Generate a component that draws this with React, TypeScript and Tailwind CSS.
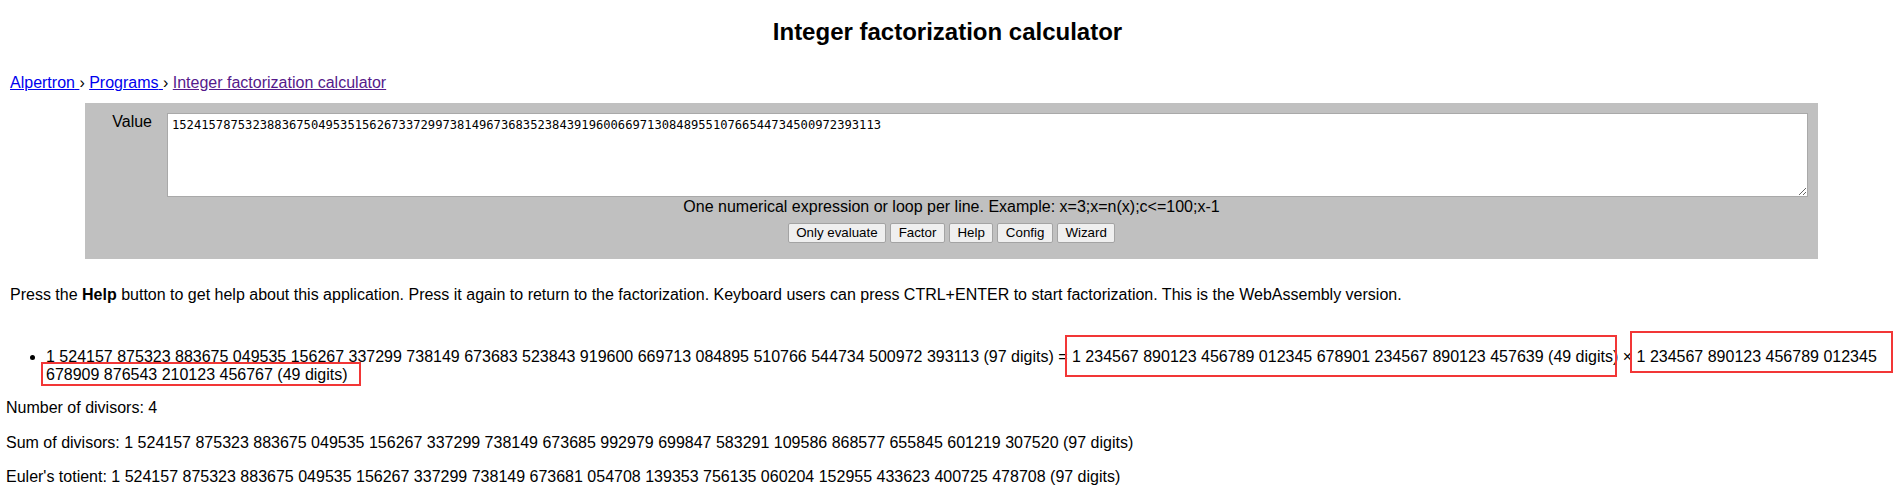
import React from "react";

const NUMBER =
  "1524157875323883675049535156267337299738149673683523843919600669713084895510766544734500972393113";

const buttons = ["Only evaluate", "Factor", "Help", "Config", "Wizard"];

// red annotation rectangles drawn over the result line
const marks = [
  "left-[1065px] top-[335px] w-[552px] h-[42px]",
  "left-[1630px] top-[331px] w-[263px] h-[42px]",
  "left-[41px] top-[362px] w-[320px] h-[24px]",
];

export default function App() {
  return (
    <div className="relative min-h-[504px] bg-white font-['Liberation_Sans',Arial,sans-serif] text-[16px] text-black">
      <h1 className="pt-[18px] text-center text-[24px] font-bold leading-[28px]">
        Integer factorization calculator
      </h1>

      <div className="mt-[28px] pl-[10px] leading-[18px]">
        <a href="#" className="text-[#0000ee] underline">
          Alpertron{" "}
        </a>
        ›{" "}
        <a href="#" className="text-[#0000ee] underline">
          Programs{" "}
        </a>
        ›{" "}
        <a href="#" className="text-[#551a8b] underline">
          Integer factorization calculator
        </a>
      </div>

      <div className="ml-[85px] mt-[11px] h-[156px] w-[1733px] bg-[#c0c0c0] pt-[10px]">
        <div className="flex pr-[10px]">
          <label className="w-[82px] shrink-0 pr-[15px] text-right leading-[18px]">Value</label>
          <textarea
            defaultValue={NUMBER}
            spellCheck={false}
            className="h-[84px] flex-1 border border-[#a9a9a9] bg-white px-[4px] pt-[4px] font-['DejaVu_Sans_Mono',monospace] text-[12.15px] leading-[15px] text-black outline-none"
          />
        </div>
        <p className="mt-[1px] text-center leading-[18px]">
          One numerical expression or loop per line. Example: x=3;x=n(x);c&lt;=100;x-1
        </p>
        <div className="mt-[7px] flex justify-center gap-[4px]">
          {buttons.map((b) => (
            <button
              key={b}
              className="h-[20px] rounded-[2px] border border-[#a3a3a3] bg-[#efefef] px-[7.5px] text-[13.33px] leading-[18px] text-black"
            >
              {b}
            </button>
          ))}
        </div>
      </div>

      <p className="mt-[27px] pl-[10px] leading-[18px]">
        Press the <b>Help</b> button to get help about this application. Press it again to return to the
        factorization. Keyboard users can press CTRL+ENTER to start factorization. This is the WebAssembly
        version.
      </p>

      <ul className="mt-[43.5px] list-disc pl-[46px] pr-[8px] leading-[18.4px]">
        <li>
          1 524157 875323 883675 049535 156267 337299 738149 673683 523843 919600 669713 084895 510766 544734
          500972 393113 (97 digits) = 1 234567 890123 456789 012345 678901 234567 890123 457639 (49 digits) ×
          1 234567 890123 456789 012345 678909 876543 210123 456767 (49 digits)
        </li>
      </ul>

      <p className="mt-[15px] pl-[6px] leading-[18.4px]">Number of divisors: 4</p>
      <p className="mt-[16px] pl-[6px] leading-[18.4px]">
        Sum of divisors: 1 524157 875323 883675 049535 156267 337299 738149 673685 992979 699847 583291 109586
        868577 655845 601219 307520 (97 digits)
      </p>
      <p className="mt-[16px] pl-[6px] leading-[18.4px]">
        Euler's totient: 1 524157 875323 883675 049535 156267 337299 738149 673681 054708 139353 756135 060204
        152955 433623 400725 478708 (97 digits)
      </p>

      {marks.map((m) => (
        <div key={m} className={"pointer-events-none absolute border-[2.5px] border-[#f23636] " + m} />
      ))}
    </div>
  );
}
